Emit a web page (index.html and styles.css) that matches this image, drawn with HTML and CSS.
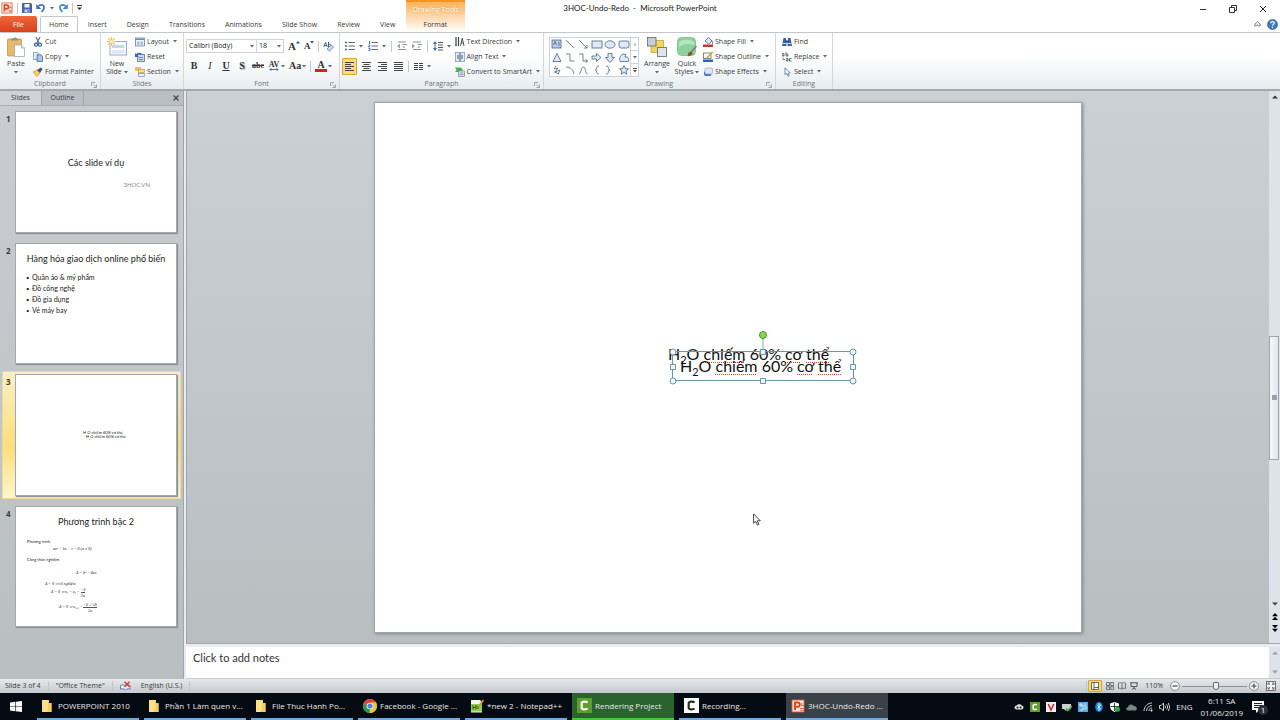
FILE: index.html
```
<!DOCTYPE html>
<html lang="en">
<head>
    <meta charset="UTF-8">
    <meta name="viewport" content="width=device-width, initial-scale=1.0">
    <title>3HOC-Undo-Redo - Microsoft PowerPoint</title>
    <link rel="stylesheet" href="styles.css">
</head>
<body>
    <!-- shared icons -->
    <svg class="defs" aria-hidden="true">
        <symbol id="caret" viewBox="0 0 4 3"><path d="M0 0h4L2 2.4z" fill="#666"/></symbol>
        <symbol id="launcher" viewBox="0 0 6 6"><path d="M.5 4V.5H4M2.500 2.500l2 2M5.500 2.500v3h-3" fill="none" stroke="#8b9199" stroke-width=".8"/></symbol>
        <symbol id="folder" viewBox="0 0 10 13"><path d="M0 1h7v3h2.500v9H0z" fill="#e9b949"/><path d="M0 1h6.500v10L5 13H0z" fill="#fbdf8b"/><path d="M6.500 4H9.500v9H5.500l1-2z" fill="#f6cd62"/></symbol>
        <symbol id="ppt" viewBox="0 0 14 14"><path d="M1 1h12v12H1z" fill="#fbe3d8" stroke="#d9633a" stroke-width=".9"/><path d="M4 11V3.500h2.500a2.200 2.200 0 0 1 0 4.400H4" fill="none" stroke="#d8481d" stroke-width="1.900"/><path d="M10.500 4v2.500H13M9 9.500h3.500M9 11.300h3.500" fill="none" stroke="#d9633a" stroke-width=".9"/></symbol>
        <symbol id="camtasia" viewBox="0 0 15 15"><path d="M10.500 4.700C9.500 3.400 5 3 4.700 5.200v4.600C5 12 9.500 11.600 10.500 10.300" fill="none" stroke="currentColor" stroke-width="2.200"/></symbol>
    </svg>

    <header class="header">
        <div class="quick">
            <svg width="12" height="12"><use href="#ppt"/></svg>
            <i class="sep"></i>
            <button aria-label="Save"><svg width="10" height="10" viewBox="0 0 10 10"><path d="M.5.500h8.500l.5.500v8.500H.5z" fill="#4a62b8" stroke="#2f4593" stroke-width=".8"/><path d="M2.500 1h5v3.500h-5z" fill="#f4f7ff"/><path d="M2.500 6.500h5V9.500h-5z" fill="#c9d3ef"/><path d="M5.500 7h1v2h-1z" fill="#2f4593"/></svg></button>
            <button aria-label="Undo"><svg width="10" height="10" viewBox="0 0 10 10"><path d="M2 3.500c3-3 6.500-1.500 6 1.500C7.700 7 6.500 8 5.500 9" fill="none" stroke="#3f6fc4" stroke-width="1.600"/><path d="M.3 1v5h5z" fill="#3f6fc4"/></svg></button>
            <svg class="caret" width="4" height="3"><use href="#caret"/></svg>
            <button aria-label="Redo"><svg width="10" height="10" viewBox="0 0 10 10"><path d="M8 3.500C5 .5 1.500 2 2 5c.3 2 1.500 3 2.500 4" fill="none" stroke="#3f82cc" stroke-width="1.600"/><path d="M9.700 1v5h-5z" fill="#3f82cc"/></svg></button>
            <i class="sep"></i>
            <button aria-label="Customize Quick Access Toolbar"><svg width="5" height="6" viewBox="0 0 5 6"><path d="M0 .5h5" stroke="#333"/><path d="M0 2.500h5L2.500 5z" fill="#333"/></svg></button>
        </div>
        <h1 class="title">3HOC-Undo-Redo&nbsp; - &nbsp;Microsoft PowerPoint</h1>
        <div class="window">
            <button aria-label="Minimize"><svg width="8" height="8" viewBox="0 0 8 8"><path d="M1 4.500h6" stroke="#333"/></svg></button>
            <button aria-label="Restore"><svg width="8" height="8" viewBox="0 0 8 8"><path d="M.5 2.500h5v5h-5zM2.500 2.500v-2h5v5h-2" fill="none" stroke="#333"/></svg></button>
            <button aria-label="Close"><svg width="8" height="8" viewBox="0 0 8 8"><path d="M1 1l6 6M7 1L1 7" stroke="#333"/></svg></button>
        </div>
        <nav class="tabs">
            <button class="tab file">File</button>
            <button class="tab active">Home</button>
            <button class="tab">Insert</button>
            <button class="tab">Design</button>
            <button class="tab">Transitions</button>
            <button class="tab">Animations</button>
            <button class="tab">Slide Show</button>
            <button class="tab">Review</button>
            <button class="tab">View</button>
        </nav>
        <div class="context">
            <span class="context-name">Drawing Tools</span>
            <button class="tab">Format</button>
        </div>
        <div class="help">
            <button aria-label="Minimize the Ribbon"><svg width="7" height="6" viewBox="0 0 7 6"><path d="M.8 3.300L3.500.8l2.700 2.500v1.500H4.500L3.500 3.600 2.500 4.800H.8z" fill="none" stroke="#555" stroke-width=".8"/></svg></button>
            <button aria-label="Help"><svg width="11" height="11" viewBox="0 0 11 11"><circle cx="5.500" cy="5.500" r="5.100" fill="#3f78bd" stroke="#2f5f9f" stroke-width=".6"/><path d="M3.700 4.200c.2-2.300 3.700-2 3.500 0-.1 1.200-1.700 1.200-1.700 2.600M5.500 7.800v1.200" fill="none" stroke="#fff" stroke-width="1.200"/></svg></button>
        </div>
    </header>

    <section class="ribbon">
        <div class="group clipboard">
            <div class="controls">
                <button class="big">
                    <svg width="18" height="20" viewBox="0 0 18 20"><rect x=".5" y="2" width="14" height="17" rx="1" fill="#e9b864" stroke="#b98a3c" stroke-width=".7"/><path d="M4 3.500V1.500h2C6 0 9.500 0 9.500 1.500H11v2z" fill="#8d8f94"/><path d="M7.500 8h7l3 3v8.500h-10z" fill="#fff" stroke="#8aa0c0" stroke-width=".7"/><path d="M14.500 8v3h3" fill="#dfe8f5" stroke="#8aa0c0" stroke-width=".7"/></svg>
                    <span>Paste</span>
                    <svg class="caret" width="4" height="3"><use href="#caret"/></svg>
                </button>
                <div class="rows">
                    <button><svg width="10" height="10" viewBox="0 0 10 10"><path d="M3 0l3 6M7 0L4 6" stroke="#5c6e92" stroke-width="1.200"/><circle cx="3" cy="7.700" r="1.500" fill="none" stroke="#2e5fb0" stroke-width="1.200"/><circle cx="7" cy="7.700" r="1.500" fill="none" stroke="#2e5fb0" stroke-width="1.200"/></svg>Cut</button>
                    <button><svg width="10" height="10" viewBox="0 0 10 10"><path d="M.5.500h4l1.500 2v5H.5z" fill="#e8f0fb" stroke="#6b8dc5" stroke-width=".8"/><path d="M4 2.800h4l1.500 2v4.700H4z" fill="#a9c3ea" stroke="#3f68ae" stroke-width=".8"/></svg>Copy <svg class="caret" width="4" height="3"><use href="#caret"/></svg></button>
                    <button><svg width="10" height="10" viewBox="0 0 10 10"><path d="M0 5l4-2 3 3-3 3.500z" fill="#f4d35a" stroke="#b98f25" stroke-width=".6"/><path d="M4 3l4-2.500 1.500 1.500L7 6z" fill="#4a4f6a"/></svg>Format Painter</button>
                </div>
            </div>
            <div class="caption">Clipboard<button class="launch" aria-label="Clipboard options"><svg width="6" height="6"><use href="#launcher"/></svg></button></div>
        </div>

        <div class="group slides-group">
            <div class="controls">
                <button class="big">
                    <svg width="20" height="20" viewBox="0 0 20 20"><rect x="3" y="4.500" width="16.500" height="13.500" fill="#f8fbff" stroke="#7f97b8" stroke-width=".8"/><path d="M5 8h12.500v3H5z" fill="#c8d6ea"/><path d="M5 13h12.500v3.500H5z" fill="#dde7f4"/><path d="M4.500 0v9M0 4.500h9M1.300 1.300l6.400 6.400M7.700 1.300L1.300 7.700" stroke="#f3c62d" stroke-width="1.200"/><circle cx="4.500" cy="4.500" r="1.700" fill="#fff3a8"/></svg>
                    <span>New</span>
                    <span>Slide <svg class="caret" width="4" height="3"><use href="#caret"/></svg></span>
                </button>
                <div class="rows">
                    <button><svg width="10" height="10" viewBox="0 0 10 10"><rect x=".5" y="1" width="9" height="8" fill="#eef4fc" stroke="#6680aa" stroke-width=".8"/><path d="M1 1.500h8v1.500H1z" fill="#6b8ec6"/><path d="M2 4.500h2.500v3.500H2zM5.500 4.500H8v3.500H5.500z" fill="#a7bddf"/></svg>Layout <svg class="caret" width="4" height="3"><use href="#caret"/></svg></button>
                    <button><svg width="10" height="10" viewBox="0 0 10 10"><rect x="2.500" y="2.500" width="7" height="7" fill="#c9daf3" stroke="#5573a8" stroke-width=".8"/><path d="M1 4.500C1 1 5 .8 6.500 2.500" fill="none" stroke="#2f66b8" stroke-width="1.300"/><path d="M0 1v4h4z" fill="#2f66b8"/><path d="M4 5.500h4M4 7.500h4" stroke="#5573a8" stroke-width=".8"/></svg>Reset</button>
                    <button><svg width="10" height="10" viewBox="0 0 10 10"><path d="M0 1h6M0 3h4" stroke="#e6b23a" stroke-width="1.400"/><rect x="3.500" y="2.500" width="6" height="3" fill="#f9dd84" stroke="#b78b29" stroke-width=".6"/><rect x="3.500" y="6.500" width="6" height="3" fill="#e8effa" stroke="#6680aa" stroke-width=".6"/></svg>Section <svg class="caret" width="4" height="3"><use href="#caret"/></svg></button>
                </div>
            </div>
            <div class="caption">Slides</div>
        </div>

        <div class="group font-group">
            <div class="controls">
                <div class="two-rows">
                    <div class="line">
                        <div class="combos">
                            <label class="combo family"><select aria-label="Font"><option>Calibri (Body)</option></select><svg class="caret" width="4" height="3"><use href="#caret"/></svg></label>
                            <label class="combo size"><select aria-label="Font size"><option>18</option></select><svg class="caret" width="4" height="3"><use href="#caret"/></svg></label>
                        </div>
                        <button class="serif grow" aria-label="Increase font size">A<svg width="4" height="3" viewBox="0 0 4 3"><path d="M0 2.500h4L2 0z" fill="#2d4f88"/></svg></button>
                        <button class="serif shrink" aria-label="Decrease font size">A<svg width="4" height="3" viewBox="0 0 4 3"><path d="M0 0h4L2 2.500z" fill="#2d4f88"/></svg></button>
                        <i class="sep"></i>
                        <button aria-label="Clear formatting"><svg width="11" height="11" viewBox="0 0 11 11"><path d="M.7 6l1.800-4.500L4.300 6M1.300 4.500h2.400M5.500 1v5M5.500 3.500c3-1.500 3 2.500 0 2" fill="none" stroke="#4a5d82"/><path d="M4 8l4-4 2.500 2-4 4.200z" fill="#cfdcf4" stroke="#5c7fb8" stroke-width=".8"/></svg></button>
                    </div>
                    <div class="line formats">
                        <button class="serif"><b>B</b></button>
                        <button class="serif"><em>I</em></button>
                        <button class="serif"><u>U</u></button>
                        <button class="serif shadow"><b>S</b></button>
                        <button class="serif small"><s>abc</s></button>
                        <button class="serif small spacing" aria-label="Character spacing">AV<svg width="10" height="3" viewBox="0 0 10 3"><path d="M0 1.500L2.500 0v1h5V0L10 1.500 7.500 3V2h-5v1z" fill="#3c74c0"/></svg></button>
                        <svg class="caret" width="4" height="3"><use href="#caret"/></svg>
                        <button class="serif">Aa</button>
                        <svg class="caret" width="4" height="3"><use href="#caret"/></svg>
                        <i class="sep"></i>
                        <button class="serif color" aria-label="Font color">A</button>
                        <svg class="caret" width="4" height="3"><use href="#caret"/></svg>
                    </div>
                </div>
            </div>
            <div class="caption">Font<button class="launch" aria-label="Font options"><svg width="6" height="6"><use href="#launcher"/></svg></button></div>
        </div>

        <div class="group paragraph">
            <div class="controls">
                <div class="two-rows">
                    <div class="line">
                        <button aria-label="Bullets"><svg width="10" height="10" viewBox="0 0 10 10"><path d="M0 1.500h2M0 5h2M0 8.500h2" stroke="#3a62a6" stroke-width="1.600"/><path d="M3.500 1.500H10M3.500 5H10M3.500 8.500H10" stroke="#555" stroke-width=".9"/></svg></button>
                        <svg class="caret" width="4" height="3"><use href="#caret"/></svg>
                        <button aria-label="Numbering"><svg width="10" height="10" viewBox="0 0 10 10"><path d="M1.500 0v3M.5 4h1.500L.5 6h1.500M.5 7.500h1.500v2H.5" fill="none" stroke="#3a62a6" stroke-width=".9"/><path d="M3.500 1.500H10M3.500 5H10M3.500 8.500H10" stroke="#555" stroke-width=".9"/></svg></button>
                        <svg class="caret" width="4" height="3"><use href="#caret"/></svg>
                        <i class="sep"></i>
                        <button aria-label="Decrease indent"><svg width="10" height="10" viewBox="0 0 10 10"><path d="M1 1h8M5.500 3.500H10M5.500 6H8M1 8.500h8" stroke="#8b9096"/><path d="M3 2.500v5L0 5z" fill="#9aa3ae"/></svg></button>
                        <button aria-label="Increase indent"><svg width="10" height="10" viewBox="0 0 10 10"><path d="M1 1h8M5.500 3.500H10M5.500 6H8M1 8.500h8" stroke="#8b9096"/><path d="M0 2.500v5L3 5z" fill="#9aa3ae"/></svg></button>
                        <i class="sep"></i>
                        <button aria-label="Line spacing"><svg width="10" height="10" viewBox="0 0 10 10"><path d="M0 3l2-3 2 3zM0 7l2 3 2-3z" fill="#3c6fb8"/><path d="M2 2v6" stroke="#3c6fb8"/><path d="M5 1.500h5M5 4h5M5 6.500h5M5 9h5" stroke="#555"/></svg></button>
                        <svg class="caret" width="4" height="3"><use href="#caret"/></svg>
                    </div>
                    <div class="line aligns">
                        <button class="pressed" aria-label="Align left"><svg width="9" height="9" viewBox="0 0 9 9"><path d="M0 .5h9M0 2.500h6M0 4.500h9M0 6.500h6M0 8.500h9" stroke="#444"/></svg></button>
                        <button aria-label="Center"><svg width="9" height="9" viewBox="0 0 9 9"><path d="M0 .5h9M1.500 2.500h6M0 4.500h9M1.500 6.500h6M0 8.500h9" stroke="#444"/></svg></button>
                        <button aria-label="Align right"><svg width="9" height="9" viewBox="0 0 9 9"><path d="M0 .5h9M3 2.500h6M0 4.500h9M3 6.500h6M0 8.500h9" stroke="#444"/></svg></button>
                        <button aria-label="Justify"><svg width="9" height="9" viewBox="0 0 9 9"><path d="M0 .5h9M0 2.500h9M0 4.500h9M0 6.500h9M0 8.500h9" stroke="#444"/></svg></button>
                        <i class="sep"></i>
                        <button aria-label="Columns"><svg width="9" height="9" viewBox="0 0 9 9"><path d="M0 1.500h4M0 3.500h4M0 5.500h4M0 7.500h4M5 1.500h4M5 3.500h4M5 5.500h4M5 7.500h4" stroke="#444" stroke-width="1.200"/></svg></button>
                        <svg class="caret" width="4" height="3"><use href="#caret"/></svg>
                    </div>
                </div>
                <div class="rows">
                    <button><svg width="10" height="10" viewBox="0 0 10 10"><path d="M1 0v9M3.500 0v9" stroke="#444" stroke-width="1.200"/><path d="M5.500 9l1.800-8L9 9M6 6h2.500" fill="none" stroke="#555"/><path d="M0 7.500h2L1 10z" fill="#3c6fb8"/></svg>Text Direction <svg class="caret" width="4" height="3"><use href="#caret"/></svg></button>
                    <button><svg width="10" height="10" viewBox="0 0 10 10"><rect x=".5" y=".5" width="9" height="9" fill="#e3ecf9" stroke="#7d9ccb" stroke-width=".8"/><path d="M2 4h6M2 6h6" stroke="#555"/><path d="M3.500 2.500L5 .7l1.500 1.800zM3.500 7.500L5 9.300l1.500-1.800z" fill="#2f66b8"/></svg>Align Text <svg class="caret" width="4" height="3"><use href="#caret"/></svg></button>
                    <button><svg width="10" height="10" viewBox="0 0 10 10"><path d="M0 .5h5.500l2.500 2-2.500 2.500H0l1.500-2z" fill="#4cae62"/><rect x="3.500" y="4" width="6" height="5.500" fill="#eaf2ea" stroke="#6c8d7b" stroke-width=".7"/><path d="M4.500 6h4M4.500 7.800h4" stroke="#5f7fa8" stroke-width=".8"/></svg>Convert to SmartArt <svg class="caret" width="4" height="3"><use href="#caret"/></svg></button>
                </div>
            </div>
            <div class="caption">Paragraph<button class="launch" aria-label="Paragraph options"><svg width="6" height="6"><use href="#launcher"/></svg></button></div>
        </div>

        <div class="group drawing">
            <div class="controls">
                <div class="gallery">
                    <button class="shapes" aria-label="Shapes">
                        <svg width="80" height="38" viewBox="0 0 80 38" fill="none" stroke="#4f6378" stroke-width=".8">
                            <rect x="2" y="2" width="9" height="8" fill="#b6cdec"/><path d="M3.500 7l1.500-3.500L6.500 7M8 5h2M8 7h2"/>
                            <path d="M16 2l8 8M29 2l8 8M37 7v3h-3"/>
                            <rect x="42" y="3" width="10" height="7" fill="#dbe9f8"/>
                            <ellipse cx="60" cy="6.500" rx="5" ry="3.700" fill="#dbe9f8"/>
                            <rect x="69" y="3" width="10" height="7" rx="2" fill="#dbe9f8"/>
                            <path d="M3 23.500l4-8 4 8z" fill="#dbe9f8"/>
                            <path d="M16 16h4v7h4.500M29 16h4v7h4.500M35.500 21.500l2 1.500-2 1.500"/>
                            <path d="M42 18h4.500v-2.500l4.500 4-4.500 4V21H42z" fill="#dbe9f8"/>
                            <path d="M58 15.500h4v4h2.500l-4.500 5-4.500-5H58z" fill="#dbe9f8"/>
                            <path d="M70 23.500c-1-3 0-6 3-7.500l3 .5-1 2.500c3-.5 4 1 3.500 4.500z" fill="#dbe9f8"/>
                            <path d="M6 28l-2 3 4-1-3 4 5-2-2 4M4 34l5 2"/>
                            <path d="M16 29c4 0 7 2 8 7M29 36c2 0 2-7 4.500-7s1.500 7 4 7M49 28c-4 0-1 4-4 4 3 0 0 4 4 4M56 28c4 0 1 4 4 4-3 0 0 4-4 4"/>
                            <path d="M74 27.500l1.300 3 3.200.3-2.500 2 .8 3.400-2.800-1.800-2.800 1.800.8-3.400-2.500-2 3.200-.3z" fill="#dbe9f8"/>
                        </svg>
                    </button>
                    <div class="gallery-nav">
                        <button aria-label="Previous row"><svg width="4" height="3" viewBox="0 0 4 3"><path d="M0 2.500h4L2 0z" fill="#bbb"/></svg></button>
                        <button aria-label="Next row"><svg width="4" height="3"><use href="#caret"/></svg></button>
                        <button aria-label="More shapes"><svg width="4" height="5" viewBox="0 0 4 5"><path d="M0 .5h4" stroke="#555"/><path d="M0 2h4L2 4.500z" fill="#555"/></svg></button>
                    </div>
                </div>
                <button class="big arrange">
                    <svg width="20" height="20" viewBox="0 0 20 20"><rect x="4" y="3.500" width="12.500" height="12" fill="#f6d35c" stroke="#c79b27" stroke-width=".7"/><rect x=".5" y=".5" width="8.500" height="8.500" fill="#c8ced7" stroke="#5f6671" stroke-width=".8"/><rect x="10.500" y="10.500" width="9" height="9" fill="#dfe3ea" stroke="#5f6671" stroke-width=".8"/></svg>
                    <span>Arrange</span>
                    <svg class="caret" width="4" height="3"><use href="#caret"/></svg>
                </button>
                <button class="big quick-styles">
                    <svg width="20" height="20" viewBox="0 0 20 20"><rect x=".5" y=".5" width="18" height="18" rx="4" fill="#8bd39a" stroke="#7abf88" stroke-width=".8"/><path d="M2 5c3-3 11-3 15 0v3C12 6 6 7 2 10z" fill="#b5e6bd"/><path d="M19.500 9l-6 7" stroke="#7a7c78" stroke-width="1.500"/><path d="M14.500 14.500l-3 1-1 3.500c2 .5 4.500-.5 5-3z" fill="#84592f"/></svg>
                    <span>Quick</span>
                    <span>Styles <svg class="caret" width="4" height="3"><use href="#caret"/></svg></span>
                </button>
                <div class="rows">
                    <button><svg width="10" height="10" viewBox="0 0 10 10"><path d="M2 4l3.500-3.500L9 4 5.500 7z" fill="#e2e9f4" stroke="#4a5d82" stroke-width=".8"/><path d="M8.500 3.500c1.500 1 1.200 2.500 1 3.500" fill="none" stroke="#2f66b8"/><path d="M0 7.500h10V10H0z" fill="#c0392f"/></svg>Shape Fill <svg class="caret" width="4" height="3"><use href="#caret"/></svg></button>
                    <button><svg width="10" height="10" viewBox="0 0 10 10"><rect x=".5" y="1" width="7.500" height="5.500" fill="#fff" stroke="#666" stroke-width=".8"/><path d="M9.500 0L4 6" stroke="#d8a52e" stroke-width="1.700"/><path d="M0 7.500h10V10H0z" fill="#2f66b8"/></svg>Shape Outline <svg class="caret" width="4" height="3"><use href="#caret"/></svg></button>
                    <button><svg width="10" height="10" viewBox="0 0 10 10"><rect x="1" y="4" width="7.500" height="5" rx="2" fill="#3f6fb5"/><rect x="2" y="1" width="7.500" height="6" rx="1.500" fill="#dbe7f7" stroke="#86a5d3" stroke-width=".7"/></svg>Shape Effects <svg class="caret" width="4" height="3"><use href="#caret"/></svg></button>
                </div>
            </div>
            <div class="caption">Drawing<button class="launch" aria-label="Drawing options"><svg width="6" height="6"><use href="#launcher"/></svg></button></div>
        </div>

        <div class="group editing">
            <div class="controls">
                <div class="rows">
                    <button><svg width="10" height="10" viewBox="0 0 10 10"><path d="M1.500 1h2.500l.5 8H0z" fill="#3a62a6"/><path d="M6 1h2.500L10 9H5.500z" fill="#3a62a6"/><path d="M3.500 3.500h3v2h-3z" fill="#24406f"/><path d="M.8 6.500h3M6.200 6.500h3" stroke="#cfdcf2"/></svg>Find</button>
                    <button><svg width="10" height="10" viewBox="0 0 10 10"><path d="M0 1.500h2v2.500H.5V3H2M4 0v4M4 2h2v2H4M4 6.500h2V9H4.500V7.800H6" fill="none" stroke="#555" stroke-width=".8"/><path d="M9.500 6.500h-2V9h2" fill="none" stroke="#2f8f4a"/><path d="M1 5.500v2h2" fill="none" stroke="#2f66b8" stroke-width=".8"/></svg>Replace <svg class="caret" width="4" height="3"><use href="#caret"/></svg></button>
                    <button><svg width="10" height="10" viewBox="0 0 10 10"><path d="M3 .8v7l1.700-1.500L6 9.300l1.200-.6L6 6h2.300z" fill="#fff" stroke="#54709f" stroke-width=".8"/></svg>Select <svg class="caret" width="4" height="3"><use href="#caret"/></svg></button>
                </div>
            </div>
            <div class="caption">Editing</div>
        </div>
    </section>

    <main class="workspace">
        <aside class="pane">
            <div class="pane-tabs">
                <button class="active">Slides</button>
                <button>Outline</button>
                <button class="pane-close" aria-label="Close pane"><svg width="6" height="6" viewBox="0 0 6 6"><path d="M.5.500l5 5M5.500.500l-5 5" stroke="#444" stroke-width="1.200"/></svg></button>
            </div>
            <ol class="thumbs">
                <li>
                    <span class="num">1</span>
                    <div class="thumb cover">
                        <p class="thumb-title">Các slide ví dụ</p>
                        <p class="thumb-sub">3HOC.VN</p>
                    </div>
                </li>
                <li>
                    <span class="num">2</span>
                    <div class="thumb goods">
                        <p class="thumb-title">Hàng hóa giao dịch online phổ biến</p>
                        <ul>
                            <li>Quần áo &amp; mỹ phẩm</li>
                            <li>Đồ công nghệ</li>
                            <li>Đồ gia dụng</li>
                            <li>Vé máy bay</li>
                        </ul>
                    </div>
                </li>
                <li class="selected">
                    <span class="num">3</span>
                    <div class="thumb water">
                        <p>H<sub>2</sub>O chiếm 60% cơ thể</p>
                        <p>H<sub>2</sub>O chiếm 60% cơ thể</p>
                    </div>
                </li>
                <li>
                    <span class="num">4</span>
                    <div class="thumb equation">
                        <p class="thumb-title">Phương trình bậc 2</p>
                        <p class="note">Phương trình</p>
                        <p class="math general">ax² + bx + c = 0 (a ≠ 0)</p>
                        <p class="note">Công thức nghiệm</p>
                        <p class="math delta">Δ = b² − 4ac</p>
                        <p class="math none">Δ &lt; 0 ⇒ vô nghiệm</p>
                        <p class="math single">Δ = 0 ⇒ x₁ = x₂ = <span class="frac"><span>−b</span><span>2a</span></span></p>
                        <p class="math double">Δ &gt; 0 ⇒ x₁,₂ = <span class="frac"><span>−b ± √Δ</span><span>2a</span></span></p>
                    </div>
                </li>
            </ol>
        </aside>

        <div class="editor">
            <div class="stage">
                <div class="canvas">
                    <article class="slide">
                        <p class="water-text back">H<sub>2</sub>O <span>chiếm</span> 60% <span>cơ</span> <span>thể</span></p>
                        <div class="textbox">
                            <svg class="frame" viewBox="0 0 190 56">
                                <path d="M95 8v14" stroke="#7fa9bb"/>
                                <rect x="4.500" y="21.500" width="181" height="29" fill="none" stroke="#6b96a8"/>
                                <circle cx="95" cy="5" r="3.500" fill="#86d64e" stroke="#4f8f37"/>
                                <g fill="#eef8fc" stroke="#6b96a8"><circle cx="5" cy="22" r="3"/><circle cx="185" cy="22" r="3"/><circle cx="5" cy="51" r="3"/><circle cx="185" cy="51" r="3"/>
                                <path d="M92.500 19.500h5v5h-5zM92.500 48.500h5v5h-5zM2.500 34.500h5v5h-5zM182.500 34.500h5v5h-5z"/></g>
                            </svg>
                            <p class="water-text">H<sub>2</sub>O <span>chiếm</span> 60% <span>cơ</span> <span>thể</span></p>
                        </div>
                        <svg class="cursor" width="8" height="13" viewBox="0 0 8 13"><path d="M.6.900v9.300l2.200-1.900 1.600 3.800 1.500-.6-1.600-3.700h3z" fill="#fff" stroke="#333" stroke-width=".9"/></svg>
                    </article>
                </div>
                <div class="scroll">
                    <button aria-label="Scroll up"><svg width="6" height="4" viewBox="0 0 6 4"><path d="M0 3.500h6L3 .5z" fill="#333"/></svg></button>
                    <div class="track"><div class="grip"></div></div>
                    <button aria-label="Scroll down"><svg width="6" height="4" viewBox="0 0 6 4"><path d="M0 .5h6L3 3.500z" fill="#444"/></svg></button>
                    <button aria-label="Previous slide"><svg width="6" height="7" viewBox="0 0 6 7"><path d="M0 3.300h6L3 0zM0 7h6L3 3.700z"/></svg></button>
                    <button aria-label="Next slide"><svg width="6" height="7" viewBox="0 0 6 7"><path d="M0 0h6L3 3.300zM0 3.700h6L3 7z"/></svg></button>
                </div>
            </div>
            <div class="notes">
                <textarea aria-label="Notes" placeholder="Click to add notes"></textarea>
                <div class="scroll">
                    <button aria-label="Scroll notes up"><svg width="6" height="4" viewBox="0 0 6 4"><path d="M0 3.500h6L3 .5z" fill="#9aa0a6"/></svg></button>
                    <button aria-label="Scroll notes down"><svg width="6" height="4" viewBox="0 0 6 4"><path d="M0 .5h6L3 3.500z" fill="#9aa0a6"/></svg></button>
                </div>
            </div>
        </div>
    </main>

    <footer class="status">
        <span>Slide 3 of 4</span>
        <i class="sep"></i>
        <span>"Office Theme"</span>
        <i class="sep"></i>
        <button aria-label="Spelling"><svg width="11" height="10" viewBox="0 0 11 10"><path d="M.5 4.500C2 3.300 4 3.500 5.500 5c1.500-1.500 3-1.500 4.500-.5v3.700C8.500 7.500 7 7.700 5.500 9 4 7.700 2 7.500.5 8.200z" fill="#dfe9f8" stroke="#4a6fa8" stroke-width=".8"/><path d="M4.500.8l5 5M9.500.8l-5 5" stroke="#d5382c" stroke-width="1.400"/></svg></button>
        <span class="lang">English (U.S.)</span>
        <i class="sep"></i>
        <div class="views">
            <i class="sep"></i>
            <button class="pressed" aria-label="Normal"><svg width="8" height="8" viewBox="0 0 8 8"><path d="M.5.500h7v7h-7zM3 .5v7M3 5.500h4.500" fill="#fff" stroke="#555" stroke-width=".9"/></svg></button>
            <button aria-label="Slide Sorter"><svg width="8" height="8" viewBox="0 0 8 8"><path d="M.5.500h3v3h-3zM4.700.500h3v3h-3zM.5 4.700h3v3h-3zM4.700 4.700h3v3h-3z" fill="none" stroke="#666" stroke-width=".9"/></svg></button>
            <button aria-label="Reading View"><svg width="8" height="8" viewBox="0 0 8 8"><path d="M.5 1C2 .3 3 .5 4 1.500 5 .5 6 .3 7.500 1v5.500C6 6 5 6.300 4 7.300 3 6.300 2 6 .5 6.500zM4 1.500v5.500" fill="none" stroke="#666" stroke-width=".9"/></svg></button>
            <button aria-label="Slide Show"><svg width="8" height="8" viewBox="0 0 8 8"><path d="M0 .8h8M1 1v3.500h6V1M4 4.500v2M2 7.500L4 6l2 1.500" fill="none" stroke="#555"/></svg></button>
        </div>
        <span class="percent">110%</span>
        <button aria-label="Zoom out"><svg width="10" height="10" viewBox="0 0 10 10"><circle cx="5" cy="5" r="4.400" fill="#f6f7f8" stroke="#777" stroke-width=".8"/><path d="M2.500 5h5" stroke="#444" stroke-width="1.200"/></svg></button>
        <input class="zoom" type="range" min="0" max="100" value="52" aria-label="Zoom">
        <button aria-label="Zoom in"><svg width="10" height="10" viewBox="0 0 10 10"><circle cx="5" cy="5" r="4.400" fill="#f6f7f8" stroke="#777" stroke-width=".8"/><path d="M2.500 5h5M5 2.500v5" stroke="#444" stroke-width="1.200"/></svg></button>
        <button class="fit" aria-label="Fit slide to window"><svg width="10" height="10" viewBox="0 0 10 10"><rect x=".5" y=".5" width="9" height="9" fill="#f3f4f5" stroke="#555" stroke-width=".8"/><path d="M2 4V2h2M6 2h2v2M8 6v2H6M4 8H2V6M2 2l2 2M8 2L6 4M8 8L6 6M2 8l2-2" fill="none" stroke="#555" stroke-width=".8"/></svg></button>
    </footer>

    <nav class="taskbar">
        <button class="start" aria-label="Start"><svg width="12" height="11" viewBox="0 0 12 11"><path d="M0 1.500L5.200.8V5.200H0zM5.800.700L12 0v5.200H5.800zM0 5.800h5.200v4.400L0 9.500zM5.800 5.800H12V11l-6.200-.7z" fill="#fff"/></svg></button>
        <button class="task folder"><svg width="10" height="13"><use href="#folder"/></svg><span>POWERPOINT 2010</span></button>
        <button class="task folder"><svg width="10" height="13"><use href="#folder"/></svg><span>Phần 1 Làm quen v...</span></button>
        <button class="task folder"><svg width="10" height="13"><use href="#folder"/></svg><span>File Thuc Hanh Po...</span></button>
        <button class="task"><svg width="14" height="14" viewBox="0 0 14 14"><circle cx="7" cy="7" r="7" fill="#f3c52f"/><path d="M7 7L1 3.400A7 7 0 0 1 13.100 3.600H7z" fill="#dd4437"/><path d="M13.100 3.600H7L1 3.400 4 8.700l3-1.700 3 1.500z" fill="#dd4437"/><path d="M13.100 3.600H8l2 4.500L7 14a7 7 0 0 0 6.100-10.400z" fill="#f3c52f"/><path d="M1 3.400l3 5.300L7 10.300 6.500 14A7 7 0 0 1 1 3.400z" fill="#1f9d58"/><circle cx="7" cy="7" r="3.300" fill="#fff"/><circle cx="7" cy="7" r="2.600" fill="#4586f0"/></svg><span>Facebook - Google ...</span></button>
        <button class="task"><svg width="14" height="14" viewBox="0 0 14 14"><path d="M1 1h9l2 2v10.500H1z" fill="#f2f5e8"/><path d="M1 5h11v7.500H1z" fill="#8fd04a"/><path d="M3 6v4.500M3 8.500h3M6 6v4.500M8 7v3" stroke="#35501c"/><path d="M13.500 1L8.500 7.500" stroke="#d9912b" stroke-width="1.700"/></svg><span>*new 2 - Notepad++</span></button>
        <button class="task rendering"><svg class="cam green" width="15" height="15"><use href="#camtasia"/></svg><span>Rendering Project</span></button>
        <button class="task"><svg class="cam white" width="15" height="15"><use href="#camtasia"/></svg><span>Recording...</span></button>
        <button class="task current"><svg width="14" height="14"><use href="#ppt"/></svg><span>3HOC-Undo-Redo ...</span></button>
        <div class="tray">
            <svg width="10" height="10" viewBox="0 0 10 10"><path d="M2.500 7.500a2 2 0 0 1 0-4C4 1.500 7 2 7.500 3.500a2 2 0 0 1 0 4z" fill="#ddd"/><circle cx="3.500" cy="5.500" r="1" fill="#222"/><circle cx="6.500" cy="5.500" r="1" fill="#222"/></svg>
            <svg class="cam green" width="10" height="10"><use href="#camtasia"/></svg>
            <svg width="10" height="10" viewBox="0 0 10 10"><path d="M0 0h10v10H0z" fill="#f6eeee"/><path d="M2.200 2L5 8l2.800-6" fill="none" stroke="#c62931" stroke-width="1.500"/></svg>
            <svg width="10" height="10" viewBox="0 0 10 10"><path d="M0 2h9v5H6L4 9 2 7H0z" fill="#c9d0cf"/><path d="M4 6.500l2 2L10 4" fill="none" stroke="#49b04d" stroke-width="1.600"/></svg>
            <svg width="10" height="10" viewBox="0 0 10 10"><path d="M0 0h10v10H0z" fill="#54a7dc"/><path d="M1 3h4v4h4M3 1v4M7 1v4H9M2 8h3" fill="none" stroke="#d5eefc"/></svg>
            <svg width="10" height="10" viewBox="0 0 10 10"><ellipse cx="5" cy="5" rx="3.800" ry="5" fill="#1483dc"/><path d="M3.200 3.300l3.500 3.400L5 8.500v-7l1.700 1.800-3.500 3.400" fill="none" stroke="#fff" stroke-width=".8"/></svg>
            <svg width="10" height="10" viewBox="0 0 10 10"><path d="M4.500 0L9 1.500v3c0 2.500-2 4.200-4.500 5.500C2 8.700 0 7 0 4.500v-3z" fill="#fff"/><path d="M4.500 1v8M.5 4.500H9" stroke="#111" stroke-width=".8"/><circle cx="7.500" cy="7.300" r="2.500" fill="#2ca84a"/></svg>
            <svg width="11" height="10" viewBox="0 0 11 10"><path d="M2 8.500C0 8.500-.5 5.500 2 5.300 2.500 2.500 6 1.500 7.500 4c2-.2 3.500 1 3.300 2.700-.1 1-.8 1.800-1.800 1.800z" fill="#7d8287"/></svg>
            <svg width="10" height="10" viewBox="0 0 10 10"><path d="M1 9C1 4.500 4.500 1 9 1M3.500 9C3.500 6 6 3.500 9 3.500M6 9c0-2 1-3 3-3" fill="none" stroke="#ccc"/><circle cx="8.500" cy="8.500" r="1" fill="#fff"/></svg>
            <svg width="11" height="10" viewBox="0 0 11 10"><path d="M.5 3.500h1.700L4.500 1v8L2.200 6.500H.5zM6 3.500q1 1.500 0 3M7.700 2.300q2 2.700 0 5.400M9.300 1q2.700 4 0 8" fill="none" stroke="#ddd" stroke-width=".9"/></svg>
            <span class="input-lang">ENG</span>
            <time class="clock">6:11 SA<br>01/06/2019</time>
            <button class="action" aria-label="1 notification"><svg width="12" height="12" viewBox="0 0 12 12"><path d="M0 0h12v9H7l-3 3V9H0z" fill="#fff"/><path d="M2 2.500h8M2 4.500h8M2 6.500h8" stroke="#222"/></svg><span class="badge">1</span></button>
        </div>
    </nav>
</body>
</html>
```

FILE: styles.css
```
* {
    box-sizing: border-box;
}
body {
    margin: 0;
    height: 100vh;
    display: flex;
    flex-direction: column;
    overflow: hidden;
    font-family: "Open Sans", "Noto Sans", sans-serif;
    font-size: 7px;
    line-height: 10px;
    color: #3b3b3b;
    background-color: #fff;
}
button {
    display: flex;
    align-items: center;
    padding: 0;
    border: none;
    background: none;
    font: inherit;
    color: inherit;
    white-space: nowrap;
}
p, h1, ol, ul {
    margin: 0;
    padding: 0;
    list-style: none;
}
svg {
    flex: none;
}
.defs {
    position: absolute;
    width: 0;
    height: 0;
}
.sep {
    width: 1px;
    height: 11px;
    background-color: #c3c7cc;
}

/* title bar and tabs */
.header {
    display: grid;
    grid-template-columns: auto auto 1fr;
    grid-template-rows: 16px 16px;
}
.quick {
    grid-area: 1 / 1;
    display: flex;
    align-items: center;
    gap: 4px;
    padding-left: 1px;
}
.title {
    grid-area: 1 / 1 / 2 / -1;
    text-align: center;
    font-family: Lato, "Open Sans", sans-serif;
    font-size: 8px;
    font-weight: normal;
    line-height: 17px;
    color: #222;
}
.window {
    grid-area: 1 / 3;
    justify-self: end;
    display: flex;
    align-items: center;
    gap: 22px;
    padding: 2px 13px 0 0;
}
.tabs {
    grid-area: 2 / 1;
    display: flex;
    gap: 1px;
    padding-right: 1px;
}
.tab {
    padding: 1px 10px 0 9px;
}
.tab.file {
    width: 37px;
    margin-right: 2px;
    padding: 1px 0 0;
    justify-content: center;
    border-radius: 2px 2px 0 0;
    background-image: linear-gradient(#f0663a, #d9401a);
    color: #fff;
}
.tab.active {
    padding: 0 8px;
    border: 1px solid #c4c8cd;
    border-bottom: none;
    border-radius: 2px 2px 0 0;
    background-color: #fff;
}
.context {
    grid-area: 1 / 2 / 3 / 3;
    display: flex;
    flex-direction: column;
    align-items: center;
    width: 59px;
    border-top: 2px solid #f79320;
    background-image: linear-gradient(#fbb35d, #fdd9ae 50%, #fff);
}
.context-name {
    height: 14px;
    line-height: 16px;
    color: #fff;
    text-shadow: 0 0 2px #d98a35;
}
.context .tab {
    height: 16px;
}
.help {
    grid-area: 2 / 3;
    justify-self: end;
    display: flex;
    align-items: center;
    gap: 6px;
    padding-right: 2px;
}

/* ribbon */
.ribbon {
    display: flex;
    height: 59px;
    border-top: 1px solid #c4c8cd;
    border-bottom: 2px solid #a4a9ae;
    background-image: linear-gradient(#fff 40%, #e8ecf0);
}
.group {
    display: flex;
    flex-direction: column;
    border-right: 1px solid #d3d7dc;
}
.controls {
    display: flex;
    height: 46px;
    padding-top: 1px;
}
.clipboard {
    width: 101px;
}
.slides-group {
    width: 83px;
}
.font-group {
    width: 156px;
}
.paragraph {
    width: 204px;
}
.drawing {
    width: 232px;
}
.editing {
    width: 57px;
}
.caption {
    display: flex;
    justify-content: center;
    position: relative;
    height: 10px;
    color: #6d737b;
}
.launch {
    position: absolute;
    right: 3px;
    top: 3px;
}
.big {
    flex-direction: column;
    width: 32px;
    padding-top: 3px;
    line-height: 8px;
}
.big > svg:first-child {
    margin-bottom: 3px;
}
.big > .caret {
    margin-top: 3px;
}
.big span {
    display: flex;
    align-items: center;
    gap: 2px;
}
.rows {
    display: flex;
    flex-direction: column;
}
.rows button {
    gap: 2px;
    height: 15px;
}
.rows .caret {
    margin-left: 2px;
}
.clipboard .rows {
    padding-left: 1px;
}
.slides-group .rows {
    padding-left: 2px;
}
.two-rows {
    display: flex;
    flex-direction: column;
}
.line {
    display: flex;
    align-items: center;
    height: 20px;
    gap: 2px;
}
.font-group .line {
    padding-left: 2px;
    gap: 4px;
}
.font-group .formats {
    padding-left: 4px;
}
.font-group .formats .caret {
    margin-left: -3px;
}
.font-group .two-rows, .paragraph .two-rows {
    padding-top: 3px;
}
.font-group .controls, .paragraph .controls {
    padding-top: 0;
}
.paragraph .controls {
    justify-content: space-between;
    padding-right: 3px;
}
.paragraph .rows {
    padding-top: 1px;
}
.paragraph .line {
    padding-left: 5px;
    gap: 5px;
}
.paragraph .line .caret {
    margin-left: -1px;
}
.paragraph .aligns {
    padding-left: 2px;
    gap: 3px;
}
.paragraph .aligns button {
    padding: 3px 2px;
}
.combos {
    display: flex;
}
.combo {
    display: flex;
    align-items: center;
    height: 14px;
    padding-right: 2px;
    border: 1px solid #d0d4d9;
    background-color: #fff;
}
.combo + .combo {
    border-left: none;
}
.combo select {
    flex: 1;
    min-width: 0;
    padding: 0 0 0 2px;
    border: none;
    appearance: none;
    background: none;
    font: inherit;
    color: #222;
}
.family {
    width: 71px;
}
.size {
    width: 27px;
}
.serif {
    font-family: "Liberation Serif", serif;
    font-size: 10px;
    font-weight: bold;
    color: #333;
}
.serif em {
    font-weight: normal;
}
.grow {
    align-items: flex-start;
    font-size: 11px;
}
.shrink {
    align-items: flex-start;
    font-size: 9px;
}
.formats button {
    min-width: 12px;
    justify-content: center;
}
.shadow {
    text-shadow: 1px 1px 1px #999;
}
.small {
    font-size: 8px;
}
.spacing {
    flex-direction: column;
    line-height: 7px;
}
.color {
    line-height: 9px;
    border-bottom: 3px solid #d0202a;
}
.pressed {
    border: 1px solid #d5a63a;
    border-radius: 1px;
    background-color: #fbdc70;
}
.gallery {
    display: flex;
    align-self: flex-start;
    margin: 3px 2px 0 5px;
    border: 1px solid #ccd2d9;
    background-color: #fff;
}
.gallery-nav {
    display: flex;
    flex-direction: column;
    width: 8px;
    border-left: 1px solid #ccd2d9;
}
.gallery-nav button {
    flex: 1;
    justify-content: center;
}
.gallery-nav button + button {
    border-top: 1px solid #ccd2d9;
}
.drawing .rows {
    padding-left: 2px;
}
.quick-styles {
    width: 28px;
}
.editing .rows {
    padding-left: 6px;
}

/* slides pane */
.workspace {
    flex: 1;
    display: flex;
    min-height: 0;
    background-image: linear-gradient(#cbd0d4, #b7bdbf);
}
.pane {
    width: 184px;
    border-right: 1px solid #9fa5aa;
    background-image: linear-gradient(#c9cdd1, #b9bec0);
}
.pane-tabs {
    display: flex;
    height: 15px;
    border-bottom: 1px solid #a9aeb4;
    background-color: #babfc5;
}
.pane-tabs button {
    width: 42px;
    justify-content: center;
    border-right: 1px solid #a2a8ae;
}
.pane-tabs .active {
    background-color: #cfd3d7;
}
.pane-tabs .pane-close {
    width: 14px;
    margin-left: auto;
    border: none;
}
.thumbs {
    display: flex;
    flex-direction: column;
    gap: 4px;
    padding: 2px 2px 0 2px;
}
.thumbs > li {
    display: flex;
    padding: 3px 4px 3px 0;
}
.thumbs > .selected {
    background-image: linear-gradient(#f9efc6, #fbdf7c 60%, #fff6cf);
    outline: 1px solid #eed98d;
    outline-offset: -1px;
}
.num {
    width: 13px;
    padding: 3px 0 0 4px;
    font-size: 8px;
    font-weight: bold;
}
.thumb {
    flex: 1;
    aspect-ratio: 4 / 3;
    border: 1px solid #a3a8ad;
    background-color: #fff;
    box-shadow: 1px 1px 1px #8d9296;
    font-family: Lato, "Open Sans", sans-serif;
    font-size: 7px;
    color: #222;
}
.thumb-title {
    text-align: center;
    font-size: 9px;
    line-height: 12px;
}
.cover .thumb-title {
    padding-top: 45px;
}
.thumb-sub {
    padding: 11px 26px 0 0;
    text-align: right;
    font-size: 6px;
    color: #8a8a8a;
}
.goods .thumb-title {
    padding-top: 9px;
}
.goods ul {
    padding: 7px 0 0 16px;
}
.goods li::before {
    content: "•";
    display: inline-block;
    width: 6px;
    margin-left: -6px;
    font-size: 6px;
}
.water {
    padding: 56px 0 0 67px;
    font-size: 4px;
    line-height: 3px;
}
.water p + p {
    padding-left: 3px;
}
.water sub {
    font-size: 2px;
    line-height: 0;
}
.equation {
    font-size: 4px;
    line-height: 7px;
}
.equation .thumb-title {
    padding: 9px 0 10px;
}
.equation .note {
    padding-left: 11px;
}
.math {
    font-family: "Liberation Serif", serif;
    font-style: italic;
}
.general {
    padding: 0 0 4px 37px;
}
.delta {
    padding: 6px 0 4px 60px;
}
.none {
    padding-left: 29px;
}
.single {
    padding: 0 0 4px 35px;
}
.double {
    padding-left: 43px;
}
.frac {
    display: inline-flex;
    flex-direction: column;
    align-items: center;
    vertical-align: middle;
    line-height: 5px;
}
.frac span + span {
    align-self: stretch;
    border-top: 1px solid #555;
    text-align: center;
}

/* slide editor */
.editor {
    flex: 1;
    display: flex;
    flex-direction: column;
    min-width: 0;
    border-left: 2px solid #e9ecef;
}
.stage {
    flex: 1;
    display: flex;
    min-height: 0;
    border-left: 1px solid #9fa5aa;
}
.canvas {
    flex: 1;
    display: flex;
    justify-content: center;
    padding: 11px 0 10px;
}
.slide {
    position: relative;
    height: 100%;
    aspect-ratio: 4 / 3;
    border: 1px solid #a0a6aa;
    background-color: #fff;
    box-shadow: 1px 1px 3px #7f8588;
}
.water-text {
    font-family: Lato, "Open Sans", sans-serif;
    font-size: 16px;
    line-height: 20px;
    color: #111;
    white-space: nowrap;
}
.water-text sub {
    font-size: 11px;
    line-height: 0;
}
.water-text span {
    text-decoration: underline dotted #e0403c 1px;
    text-underline-offset: 2px;
    text-decoration-skip-ink: none;
}
.water-text.back {
    position: absolute;
    left: 293px;
    top: 241px;
}
.textbox {
    position: absolute;
    left: 293px;
    top: 227px;
    width: 190px;
    height: 56px;
    padding: 26px 0 0 12px;
}
.frame {
    position: absolute;
    inset: 0;
}
.textbox .water-text {
    position: relative;
}
.cursor {
    position: absolute;
    left: 378px;
    top: 410px;
}
.scroll {
    display: flex;
    flex-direction: column;
    align-items: center;
    justify-content: space-between;
    width: 11px;
    background-color: #dde3e9;
}
.scroll button {
    width: 11px;
    height: 12px;
    justify-content: center;
}
.stage .scroll {
    padding-bottom: 9px;
}
.track {
    flex: 1;
    display: flex;
    align-items: center;
    width: 11px;
    padding-top: 94px;
}
.grip {
    width: 10px;
    height: 124px;
    border: 1px solid #9da5af;
    background-image: linear-gradient(#9aa1a8, #9aa1a8), linear-gradient(90deg, #f6f9fc, #dfe6ed);
    background-repeat: no-repeat;
    background-size: 5px 5px, 100% 100%;
    background-position: center;
}
.notes {
    display: flex;
    height: 36px;
    border-top: 1px solid #a2a8ad;
    border-bottom: 1px solid #c8ccd0;
    box-shadow: inset 0 3px #e9ecef;
    background-color: #fff;
}
.notes textarea {
    flex: 1;
    height: 32px;
    padding: 6px 7px;
    border: none;
    resize: none;
    background: none;
    font: 11px/16px Lato, "Open Sans", sans-serif;
    color: #222;
}
.notes textarea::placeholder {
    color: #333;
}
.notes .scroll {
    margin-top: 3px;
}

/* status bar */
.status {
    display: flex;
    align-items: center;
    gap: 7px;
    height: 14px;
    padding: 0 4px 0 5px;
    background-image: linear-gradient(#e6e9ec, #c5c9cd);
}
.lang {
    padding-left: 3px;
}
.views {
    display: flex;
    align-items: center;
    gap: 4px;
    margin-left: auto;
}
.views .sep {
    margin-right: -3px;
}
.views .pressed {
    padding: 1px 2px;
}
.zoom {
    width: 65px;
    height: 10px;
    margin: 0 -5px;
    appearance: none;
    background: linear-gradient(#8d9297, #8d9297) center / 100% 1px no-repeat;
}
.zoom::-webkit-slider-thumb {
    appearance: none;
    width: 6px;
    height: 8px;
    border: 1px solid #666c72;
    border-radius: 1px 1px 3px 3px;
    background-color: #f5f6f7;
}

/* taskbar */
.taskbar {
    display: flex;
    gap: 5px;
    height: 27px;
    background-color: #050b12;
    color: #e8e8e8;
    font-size: 8px;
}
.start {
    width: 32px;
    justify-content: center;
}
.task {
    width: 102px;
    gap: 3px;
    padding-left: 5px;
    border-bottom: 2px solid #76a9d8;
}
.task.folder {
    gap: 6px;
}
.rendering {
    border-color: #49c43c;
    background-color: #2a632f;
}
.current {
    background-color: #3a4148;
}
.cam.green {
    background-color: #5f9e2e;
    color: #fff;
}
.cam.white {
    background-color: #fff;
    color: #26301f;
}
.tray {
    display: flex;
    align-items: center;
    gap: 6px;
    margin-left: auto;
    padding-right: 16px;
}
.clock {
    padding: 0 3px 0 2px;
    text-align: center;
    line-height: 12px;
}
.action {
    position: relative;
}
.badge {
    position: absolute;
    left: 6px;
    top: 4px;
    width: 10px;
    border-radius: 5px;
    background-color: #2b3036;
    color: #fff;
    text-align: center;
}
```
